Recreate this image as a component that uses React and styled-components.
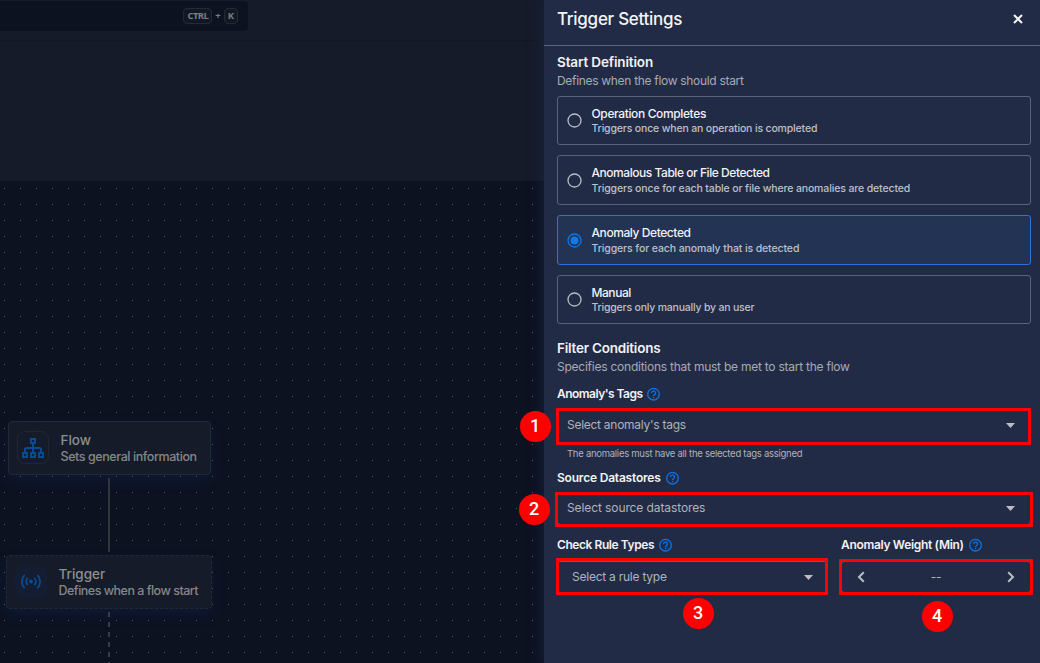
import React from "react";
import styled, { createGlobalStyle, css } from "styled-components";

const GlobalStyle = createGlobalStyle`
  * { box-sizing: border-box; }
  body { margin: 0; overflow: hidden; background: #0d1221; font-family: Inter, "Liberation Sans", sans-serif; }
`;

const Text = styled.div`
  white-space: nowrap;
  letter-spacing: ${(p) => p.$track || 0}px;
`;

const Page = styled.div`
  display: flex;
  position: relative;
  width: 1040px;
  height: 663px;
  overflow: hidden;
`;

/* ---------- dimmed workspace ---------- */
const Workspace = styled.main`
  display: flex;
  flex-direction: column;
  flex: 1;
  min-width: 0;
`;

const TopBar = styled.header`
  height: 41px;
  padding-top: 1px;
  background: #151b29;
  border-bottom: 1px solid #131824;
`;

const SearchBox = styled.div`
  display: flex;
  align-items: center;
  justify-content: flex-end;
  gap: 3px;
  width: 248px;
  height: 30px;
  padding-right: 10px;
  border-radius: 0 4px 4px 0;
  background: #0d1221;
  color: #7b7e83;
  font: 700 9.5px/14px "Open Sans", sans-serif;
`;

const Key = styled.kbd`
  display: block;
  height: 16px;
  padding: 0 3px;
  border: 1px solid #242a36;
  border-radius: 4px;
  background: #121724;
  font: inherit;
  letter-spacing: ${(p) => p.$track || 0}px;
`;

const SubHeader = styled.div`
  height: 140px;
  background: #151b29;
`;

const Canvas = styled.section`
  position: relative;
  flex: 1;
  background: #0d1221 radial-gradient(circle at 0.5px 0.5px, #5b5b5f 0.6px, transparent 0.9px) 4px 7px / 16px 16px;
`;

const Node = styled.article`
  position: absolute;
  left: ${(p) => p.$x}px;
  top: ${(p) => p.$y}px;
  display: flex;
  align-items: flex-start;
  gap: ${(p) => p.$gap}px;
  width: ${(p) => p.$w}px;
  height: 54px;
  padding: 9px 8px;
  border: 1px ${(p) => (p.$dashed ? "dashed" : "solid")} #222835;
  border-radius: 4px;
  background: #151b29;
  box-shadow: 0 6px 14px rgba(14, 50, 110, 0.22);
`;

const NodeIcon = styled.div`
  display: flex;
  align-items: center;
  justify-content: center;
  width: 32px;
  height: 33px;
  border: 1px solid ${(p) => (p.$filled ? "#141d31" : "#1f2634")};
  border-radius: 8px;
  background: ${(p) => (p.$filled ? "#141d31" : "transparent")};
  color: #064b94;
`;

const NodeTitle = styled(Text)`
  font-size: 13.5px;
  font-weight: 500;
  line-height: 18px;
  color: #8e8f92;
`;

const NodeText = styled(Text)`
  font-size: 12.5px;
  font-weight: 500;
  line-height: 16px;
  color: #85878a;
`;

const Connector = styled.div`
  position: absolute;
  left: 108px;
  top: ${(p) => p.$y}px;
  width: 2px;
  height: ${(p) => p.$h}px;
  background: ${(p) =>
    p.$dashed ? "repeating-linear-gradient(#3a3d43 0 5px, transparent 5px 10px)" : "#32353c"};
`;

/* ---------- drawer ---------- */
const Drawer = styled.aside`
  position: relative;
  width: 496px;
  background: #222b45;
  color: #e9eaed;
  box-shadow: -3px 0 12px rgba(26, 38, 66, 0.6);
`;

const DrawerHeader = styled.header`
  display: flex;
  justify-content: space-between;
  height: 46px;
  padding: 9px 16px 0 13px;
  border-bottom: 1px solid #5f667a;
`;

const DrawerTitle = styled(Text)`
  font-size: 17px;
  font-weight: 500;
  line-height: 20px;
  color: #f3f4f6;
`;

const CloseIcon = styled.svg`
  display: block;
  width: 12px;
  height: 12px;
  margin-top: 4px;
  stroke: #f5f6f8;
  stroke-width: 2;
`;

const DrawerBody = styled.div`
  padding: 7px 9px 0 13px;
`;

const Heading = styled(Text)`
  font-size: 13.5px;
  font-weight: 600;
  line-height: 18px;
  color: #f1f2f4;
`;

const Description = styled(Text)`
  margin-top: 1px;
  font-size: 12px;
  line-height: 18px;
  color: #a6aab4;
`;

const OptionList = styled.div`
  display: flex;
  flex-direction: column;
  gap: 10px;
  margin: 6px 0 15px;
`;

const OptionCard = styled.label`
  display: flex;
  align-items: center;
  gap: 9.5px;
  height: ${(p) => (p.$tall ? 50 : 49)}px;
  padding-left: 9px;
  border: 1px solid #5d6478;
  border-radius: 3px;
  ${(p) =>
    p.$selected &&
    css`
      border-color: #2c72dc;
      background: #223354;
    `}
`;

const Radio = styled.svg`
  flex: none;
  width: 15px;
  height: 15px;
  fill: none;
  stroke: ${(p) => (p.$selected ? "#0a7af0" : "#b9bcc5")};
  stroke-width: 1.3;
`;

const OptionCopy = styled.div`
  align-self: flex-start;
  padding-top: 10px;
`;

const OptionTitle = styled(Text)`
  font-size: 12px;
  font-weight: 500;
  line-height: 14px;
  color: #f1f2f4;
`;

const OptionText = styled(Text)`
  margin-top: ${(p) => (p.$tall ? 1 : 0)}px;
  font-size: 10.5px;
  font-weight: 500;
  line-height: 15px;
  color: #bdc0c8;
`;

const Label = styled(Text)`
  display: flex;
  align-items: center;
  gap: 5px;
  height: 16px;
  margin-top: ${(p) => p.$top || 0}px;
  margin-bottom: ${(p) => p.$bottom}px;
  font-size: 12px;
  font-weight: 600;
  line-height: 16px;
  color: #f1f2f4;
`;

const HelpMark = styled.svg`
  flex: none;
  width: 13px;
  height: 13px;
  overflow: visible;
  fill: none;
  stroke: #0a74e2;
`;

const Select = styled.div`
  display: flex;
  align-items: center;
  justify-content: space-between;
  height: ${(p) => p.$h || 32}px;
  padding: 0 ${(p) => p.$right || 15}px ${(p) => p.$bottom || 2}px ${(p) => p.$left || 9}px;
  border: 1px solid #5d6478;
  border-radius: 3px;
  font-size: 12px;
  color: #afb3bc;
`;

const Caret = styled.svg`
  width: 9px;
  height: 5px;
  margin-top: 2px;
  fill: #babdc6;
`;

const Helper = styled(Text)`
  margin: 5px 0 10px 10px;
  font-size: 9.5px;
  line-height: 12px;
  color: #afb3bc;
`;

const FieldRow = styled.div`
  display: grid;
  grid-template-columns: 271px 190px;
  gap: 13px;
  margin-top: 12px;
`;

const Chevron = styled.svg`
  width: 8px;
  height: 12px;
  margin-top: 1px;
  fill: none;
  stroke: #babdc6;
  stroke-width: 2;
`;

const Highlight = styled.div`
  position: absolute;
  left: ${(p) => p.$x}px;
  top: ${(p) => p.$y}px;
  width: ${(p) => p.$w}px;
  height: ${(p) => p.$h}px;
  border: 3px solid #fb0207;
`;

const Badge = styled.div`
  position: absolute;
  left: ${(p) => p.$x}px;
  top: ${(p) => p.$y}px;
  width: 31px;
  height: 31px;
  padding-right: 1px;
  border-radius: 50%;
  background: #ff0000;
  color: #fff;
  font: 500 18px/30px Roboto, sans-serif;
  text-align: center;
`;

const Help = () => (
  <HelpMark viewBox="0 0 13 13">
    <circle cx="6.5" cy="6.2" r="5.8" strokeWidth="1.3" />
    <path d="M4.5 5.1a2 2 0 1 1 3 1.6c-.7.45-1 .75-1 1.4" strokeWidth="1.3" />
    <path d="M6.5 8.8v1.3" strokeWidth="1.4" />
  </HelpMark>
);

const Down = () => (
  <Caret viewBox="0 0 9 5">
    <path d="M0 0h9L4.5 5z" />
  </Caret>
);

const FlowIcon = () => (
  <svg width="22" height="20" viewBox="0 0 22 20" fill="none" stroke="currentColor" strokeWidth="2">
    <path d="M9 1h4v4H9zM1 15h4v4H1zM9 15h4v4H9zM17 15h4v4h-4zM11 5v10M3 15v-3.5q0-1.5 1.5-1.5h13q1.5 0 1.5 1.5V15" />
  </svg>
);

const SignalIcon = () => (
  <svg width="20" height="15" viewBox="0 0 20 15" fill="none" stroke="currentColor" strokeWidth="1.8">
    <circle cx="10" cy="7.5" r="1.9" fill="currentColor" stroke="none" />
    <path d="M6.7 3.9a5 5 0 0 0 0 7.2M13.3 3.9a5 5 0 0 1 0 7.2M3.7 .8a9.4 9.4 0 0 0 0 13.4M16.3 .8a9.4 9.4 0 0 1 0 13.4" />
  </svg>
);

const options = [
  { title: "Operation Completes", t: -0.37, text: "Triggers once when an operation is completed", s: -0.16 },
  { title: "Anomalous Table or File Detected", t: -0.455, text: "Triggers once for each table or file where anomalies are detected", s: -0.13, tall: true },
  { title: "Anomaly Detected", t: -0.42, text: "Triggers for each anomaly that is detected", s: -0.11, tall: true, selected: true },
  { title: "Manual", t: -0.45, text: "Triggers only manually by an user", s: -0.2 },
];

export default function App() {
  return (
    <>
      <GlobalStyle />
      <Page>
        <Workspace>
          <TopBar>
            <SearchBox>
              <Key $track={-0.6}>CTRL</Key>
              <span>+</span>
              <Key>K</Key>
            </SearchBox>
          </TopBar>
          <SubHeader />
          <Canvas>
            <Node $x={8} $y={240} $w={203} $gap={11.5}>
              <NodeIcon><FlowIcon /></NodeIcon>
              <div>
                <NodeTitle>Flow</NodeTitle>
                <NodeText $track={-0.42}>Sets general information</NodeText>
              </div>
            </Node>
            <Connector $y={297} $h={74} />
            <Node $x={6} $y={374} $w={206} $gap={11.5} $dashed>
              <NodeIcon $filled><SignalIcon /></NodeIcon>
              <div>
                <NodeTitle>Trigger</NodeTitle>
                <NodeText $track={-0.5}>Defines when a flow start</NodeText>
              </div>
            </Node>
            <Connector $y={431} $h={51} $dashed />
          </Canvas>
        </Workspace>

        <Drawer>
          <DrawerHeader>
            <DrawerTitle $track={-0.28}>Trigger Settings</DrawerTitle>
            <CloseIcon viewBox="0 0 12 12">
              <path d="M2 2l8 8M10 2l-8 8" />
            </CloseIcon>
          </DrawerHeader>
          <DrawerBody>
            <Heading $track={-0.14}>Start Definition</Heading>
            <Description $track={-0.31}>Defines when the flow should start</Description>
            <OptionList>
              {options.map((o) => (
                <OptionCard key={o.title} $tall={o.tall} $selected={o.selected}>
                  <Radio viewBox="0 0 15 15" $selected={o.selected}>
                    <circle cx="7.5" cy="7.5" r="6.5" />
                    {o.selected && <circle cx="7.5" cy="7.5" r="4" fill="#0a7af0" stroke="none" />}
                  </Radio>
                  <OptionCopy>
                    <OptionTitle $track={o.t}>{o.title}</OptionTitle>
                    <OptionText $track={o.s} $tall={o.tall}>{o.text}</OptionText>
                  </OptionCopy>
                </OptionCard>
              ))}
            </OptionList>

            <Heading $track={-0.22}>Filter Conditions</Heading>
            <Description $track={-0.24}>Specifies conditions that must be met to start the flow</Description>

            <Label $top={10} $bottom={7} $track={-0.53}>Anomaly's Tags<Help /></Label>
            <Select $h={34} $bottom={3}>
              <Text $track={-0.27}>Select anomaly's tags</Text>
              <Down />
            </Select>
            <Helper $track={-0.27}>The anomalies must have all the selected tags assigned</Helper>

            <Label $bottom={6} $track={-0.2}>Source Datastores<Help /></Label>
            <Select $h={33}>
              <Text $track={-0.1}>Select source datastores</Text>
              <Down />
            </Select>

            <FieldRow>
              <div>
                <Label $bottom={8} $track={-0.43}>Check Rule Types<Help /></Label>
                <Select $left={14} $right={14.5}>
                  <Text $track={-0.24}>Select a rule type</Text>
                  <Down />
                </Select>
              </div>
              <div>
                <Label $bottom={8} $track={-0.32}>Anomaly Weight (Min)<Help /></Label>
                <Select $left={15} $right={15}>
                  <Chevron viewBox="0 0 8 12"><path d="M6.8 1.2L2 6l4.8 4.8" /></Chevron>
                  <Text $track={-0.3}>--</Text>
                  <Chevron viewBox="0 0 8 12"><path d="M1.2 1.2L6 6l-4.8 4.8" /></Chevron>
                </Select>
              </div>
            </FieldRow>
          </DrawerBody>
        </Drawer>

        <Highlight $x={556} $y={408} $w={475} $h={37} />
        <Highlight $x={555} $y={492} $w={478} $h={35} />
        <Highlight $x={556} $y={558} $w={272} $h={37} />
        <Highlight $x={839} $y={559} $w={194} $h={36} />
        <Badge $x={520} $y={411}>1</Badge>
        <Badge $x={519} $y={494}>2</Badge>
        <Badge $x={683} $y={598}>3</Badge>
        <Badge $x={922} $y={601}>4</Badge>
      </Page>
    </>
  );
}
